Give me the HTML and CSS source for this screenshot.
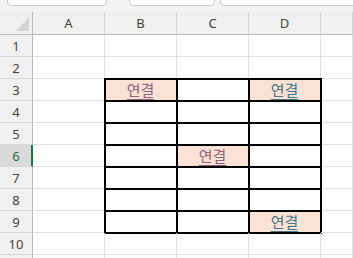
FILE: index.html
```html
<!DOCTYPE html>
<html lang="ko">
<head>
    <meta charset="UTF-8">
    <title>Sheet1</title>
    <link rel="stylesheet" href="styles.css">
</head>
<body>
    <div class="topbar">
        <div class="field name"></div>
        <div class="field small"></div>
        <div class="field wide"></div>
    </div>
    <div class="sheet">
        <div class="corner"><span class="tri"></span></div>
        <div class="ch">A</div>
        <div class="ch">B</div>
        <div class="ch">C</div>
        <div class="ch">D</div>
        <div class="ch"></div>

        <div class="rh">1</div><div class="cell"></div><div class="cell"></div><div class="cell"></div><div class="cell"></div><div class="cell"></div>
        <div class="rh">2</div><div class="cell"></div><div class="cell"></div><div class="cell"></div><div class="cell"></div><div class="cell"></div>
        <div class="rh">3</div><div class="cell"></div><div class="cell box fill"><span class="lnk visited">연결</span></div><div class="cell box"></div><div class="cell box fill"><span class="lnk">연결</span></div><div class="cell"></div>
        <div class="rh">4</div><div class="cell"></div><div class="cell box"></div><div class="cell box"></div><div class="cell box"></div><div class="cell"></div>
        <div class="rh">5</div><div class="cell"></div><div class="cell box"></div><div class="cell box"></div><div class="cell box"></div><div class="cell"></div>
        <div class="rh on">6</div><div class="cell"></div><div class="cell box"></div><div class="cell box fill"><span class="lnk visited">연결</span></div><div class="cell box"></div><div class="cell"></div>
        <div class="rh">7</div><div class="cell"></div><div class="cell box"></div><div class="cell box"></div><div class="cell box"></div><div class="cell"></div>
        <div class="rh">8</div><div class="cell"></div><div class="cell box"></div><div class="cell box"></div><div class="cell box"></div><div class="cell"></div>
        <div class="rh">9</div><div class="cell"></div><div class="cell box"></div><div class="cell box"></div><div class="cell box fill"><span class="lnk">연결</span></div><div class="cell"></div>
        <div class="rh">10</div><div class="cell"></div><div class="cell"></div><div class="cell"></div><div class="cell"></div><div class="cell"></div>
        <div class="rh"></div><div class="cell"></div><div class="cell"></div><div class="cell"></div><div class="cell"></div><div class="cell"></div>
    </div>
</body>
</html>
```

FILE: styles.css
```css
body {
    margin: 0;
    background-color: #fff;
    font-family: "Noto Sans", "Liberation Sans", sans-serif;
    overflow: hidden;
}

.topbar {
    height: 12px;
    background-color: #f3f3f3;
    display: flex;
    padding-left: 7px;
}

.field {
    height: 6px;
    box-sizing: border-box;
    background-color: #fff;
    border: 1px solid #c8c8c8;
    border-top: none;
    border-radius: 0 0 5px 5px;
}

.name {
    width: 100px;
}

.small {
    width: 86px;
    margin-left: 22px;
}

.wide {
    flex: 1;
    margin-left: 5px;
    margin-right: -10px;
}

.sheet {
    display: grid;
    grid-template-columns: 33px 72px 72px 72px 72px 1fr;
    grid-auto-rows: 22px;
    grid-template-rows: 23px;
}

.corner,
.ch,
.rh,
.cell {
    box-sizing: border-box;
    border-right: 1px solid #e1e1e1;
    border-bottom: 1px solid #e1e1e1;
}

.corner {
    background-color: #f0f0f0;
    border-right-color: #b9b9b9;
    border-bottom-color: #b9b9b9;
    position: relative;
}

.tri {
    position: absolute;
    right: 3px;
    bottom: 3px;
    width: 0;
    height: 0;
    border-left: 13px solid transparent;
    border-bottom: 14px solid #d4d4d4;
}

.ch {
    background-color: #f0f0f0;
    border-right-color: #d6d6d6;
    border-bottom-color: #b9b9b9;
    color: #444;
    font-size: 13px;
    text-align: center;
    line-height: 22px;
}

.rh {
    background-color: #f0f0f0;
    border-right-color: #b9b9b9;
    border-bottom-color: #d6d6d6;
    color: #444;
    font-size: 13px;
    text-align: center;
    line-height: 22px;
}

.rh.on {
    background-color: #dadada;
    color: #217346;
    border-right-color: #107c41;
    box-shadow: inset -1px 0 0 #107c41;
}

.box {
    border-right-color: #000;
    border-bottom-color: #000;
    box-shadow: inset 1px 1px 0 #000;
    outline: 1px solid #000;
}

.fill {
    background-color: #fbe2d5;
    display: flex;
    justify-content: center;
    align-items: center;
}

.lnk {
    font-family: "Noto Sans CJK KR", "Noto Sans", sans-serif;
    font-size: 15px;
    line-height: 20px;
    color: #467886;
    text-decoration: underline;
    text-underline-offset: 3px;
}

.lnk.visited {
    color: #96607d;
}
```
